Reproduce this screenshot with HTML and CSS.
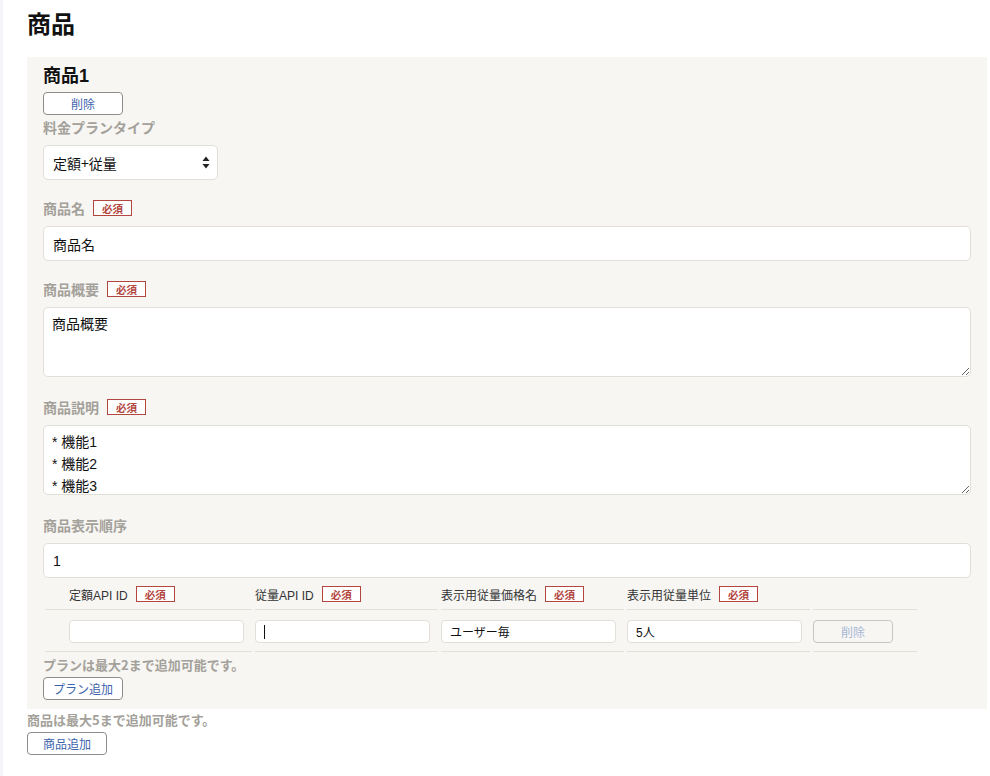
FILE: index.html
```html
<!DOCTYPE html>
<html lang="ja">
<head>
<meta charset="utf-8">
<title>商品</title>
<link rel="stylesheet" href="styles.css">
</head>
<body>
<div class="page">
  <div class="strip"></div>
  <main class="main">
    <h1 class="title">商品</h1>
    <section class="panel">
      <h2 class="product-title">商品1</h2>
      <button class="btn">削除</button>
      <div class="label-row first"><span class="label">料金プランタイプ</span></div>
      <div class="select-wrap">
        <select class="select"><option>定額+従量</option></select>
        <svg class="select-arrow" width="8" height="13" viewBox="0 0 8 13"><path d="M4 0.5 L7.5 5 L0.5 5 Z M4 12.5 L7.5 8 L0.5 8 Z" fill="#222"/></svg>
      </div>

      <div class="label-row"><span class="label">商品名</span><span class="badge">必須</span></div>
      <input class="input" type="text" value="商品名">

      <div class="label-row"><span class="label">商品概要</span><span class="badge">必須</span></div>
      <textarea class="textarea">商品概要</textarea>

      <div class="label-row after-ta"><span class="label">商品説明</span><span class="badge">必須</span></div>
      <textarea class="textarea">* 機能1
* 機能2
* 機能3</textarea>

      <div class="label-row after-ta"><span class="label">商品表示順序</span></div>
      <input class="input" type="text" value="1">

      <table class="plans">
        <thead>
          <tr>
            <th class="c1"><div class="th-in">定額API ID<span class="badge">必須</span></div></th>
            <th class="c2"><div class="th-in">従量API ID<span class="badge">必須</span></div></th>
            <th class="c3"><div class="th-in">表示用従量価格名<span class="badge">必須</span></div></th>
            <th class="c4"><div class="th-in">表示用従量単位<span class="badge">必須</span></div></th>
            <th class="c5"></th>
          </tr>
        </thead>
        <tbody>
          <tr>
            <td class="c1"><input class="cell-input" type="text" value=""></td>
            <td class="c2"><div class="caret-wrap"><input class="cell-input" type="text" value=""><span class="caret"></span></div></td>
            <td class="c3"><input class="cell-input" type="text" value="ユーザー毎"></td>
            <td class="c4"><input class="cell-input" type="text" value="5人"></td>
            <td class="c5"><button class="btn disabled" disabled>削除</button></td>
          </tr>
        </tbody>
      </table>

      <p class="note">プランは最大2まで追加可能です。</p>
      <button class="btn">プラン追加</button>
    </section>
    <p class="note outer">商品は最大5まで追加可能です。</p>
    <button class="btn">商品追加</button>
  </main>
</div>
</body>
</html>
```

FILE: styles.css
```css
* { box-sizing: border-box; }
html, body { margin: 0; padding: 0; background: #ffffff; }
body {
  font-family: "Liberation Sans", "Noto Sans CJK JP", sans-serif;
  color: #111;
  font-size: 14px;
}
.page { display: flex; min-height: 776px; }
.strip { width: 3px; background: #f3f5f9; flex: none; }
.main { flex: 1; padding: 0 3px 0 24px; }
.title {
  margin: 0;
  padding-top: 8px;
  height: 57px;
  font-size: 24px;
  line-height: 30px;
  font-weight: 700;
  font-family: "Noto Sans CJK JP", sans-serif;
}
.panel {
  background: #f7f6f3;
  padding: 6px 16px 9px 16px;
}
.product-title {
  margin: 0;
  font-size: 18px;
  line-height: 26px;
  font-weight: 700;
  font-family: "Liberation Sans", "Noto Sans CJK JP", sans-serif;
}
.btn {
  display: block;
  width: 80px;
  height: 23px;
  margin: 3px 0 0 0;
  padding: 0;
  background: #fff;
  border: 1px solid #8e8c87;
  border-radius: 4px;
  color: #3d63ad;
  font-size: 12px;
  font-family: "Noto Sans CJK JP", sans-serif;
  line-height: 21px;
}
.btn.disabled {
  margin: 0;
  color: #a8b7d6;
  background: #f7f6f3;
  border-color: #c8c6c1;
}
.label-row {
  display: flex;
  align-items: center;
  gap: 8px;
  height: 16px;
  margin: 20px 0 10px 0;
}
.label-row.first { margin-top: 4px; }
.label-row.after-ta { margin-top: 22px; }
.label {
  color: #a4a19a;
  font-weight: 700;
  font-size: 14px;
  font-family: "Noto Sans CJK JP", sans-serif;
}
.badge {
  display: inline-flex;
  align-items: center;
  justify-content: center;
  width: 39px;
  height: 16px;
  border: 1.5px solid #b3463e;
  color: #b3463e;
  font-size: 10.5px;
  font-weight: 700;
  font-family: "Noto Sans CJK JP", sans-serif;
  background: #fff;
}
.select-wrap { position: relative; width: 175px; }
.select {
  display: block;
  appearance: none;
  -webkit-appearance: none;
  width: 175px;
  height: 35px;
  padding: 0 9px;
  background: #fff;
  border: 1px solid #e2dfd8;
  border-radius: 5px;
  font-size: 14px;
  font-family: "Noto Sans CJK JP", sans-serif;
  color: #111;
}
.select-arrow { position: absolute; right: 8px; top: 11px; }
.input {
  display: block;
  width: 100%;
  height: 35px;
  padding: 0 9px;
  background: #fff;
  border: 1px solid #e2dfd8;
  border-radius: 5px;
  font-size: 14px;
  font-family: "Liberation Sans", "Noto Sans CJK JP", sans-serif;
  color: #111;
}
.textarea {
  display: block;
  width: 100%;
  height: 70px;
  margin: 0;
  padding: 5px 8px;
  background: #fff;
  border: 1px solid #e2dfd8;
  border-radius: 5px;
  font-size: 14px;
  line-height: 22px;
  font-family: "Liberation Sans", "Noto Sans CJK JP", sans-serif;
  color: #111;
  overflow: hidden;
}
.plans {
  border-collapse: separate;
  border-spacing: 3px 0;
  margin: 1px 0 0 -1px;
}
.plans th, .plans td {
  padding: 0;
  border-bottom: 1px solid #e4e1db;
  text-align: left;
  vertical-align: middle;
}
.plans th { height: 31px; font-weight: 400; }
.plans td { height: 42px; padding-top: 1px; }
.th-in {
  display: flex;
  align-items: center;
  gap: 8px;
  font-size: 12px;
  color: #333;
  font-family: "Liberation Sans", "Noto Sans CJK JP", sans-serif;
  white-space: nowrap;
}
.c1 { width: 207px; padding-left: 24px !important; }
.c2, .c3, .c4 { width: 183px; }
.c5 { width: 104px; }
.cell-input {
  display: block;
  width: 175px;
  height: 23px;
  padding: 0 8px;
  background: #fff;
  border: 1px solid #e2dfd8;
  border-radius: 4px;
  font-size: 12px;
  font-family: "Liberation Sans", "Noto Sans CJK JP", sans-serif;
  color: #111;
}
.caret-wrap { position: relative; width: 175px; }
.caret {
  position: absolute;
  left: 9px;
  top: 5px;
  width: 1px;
  height: 14px;
  background: #111;
}
.note {
  margin: 4px 0 0 0;
  color: #a4a19a;
  font-weight: 700;
  font-size: 13px;
  line-height: 18px;
  font-family: "Noto Sans CJK JP", sans-serif;
}
.note.outer { margin-top: 2px; }
```
